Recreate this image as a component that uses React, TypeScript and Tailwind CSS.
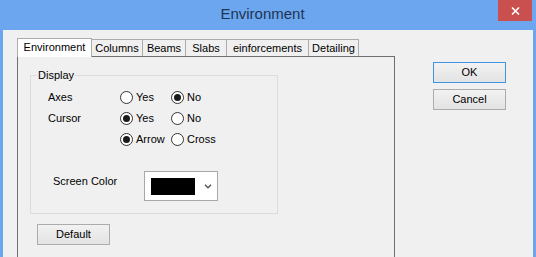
import React from 'react';

function Radio({ checked, label, width }: { checked: boolean; label: string; width: string }) {
  return (
    <div className={`flex items-center ${width}`}>
      <span className="w-[13px] h-[13px] rounded-full border border-[#333] bg-white flex items-center justify-center">
        {checked && <span className="w-[7px] h-[7px] rounded-full bg-[#1a1a1a]" />}
      </span>
      <span className="ml-[3px] leading-[13px]">{label}</span>
    </div>
  );
}

function Button({ label, primary }: { label: string; primary?: boolean }) {
  return (
    <button
      className={`w-[73px] h-[21px] border bg-gradient-to-b from-[#f2f2f2] to-[#e3e3e3] leading-[13px] ${
        primary ? 'border-[#3d95e0]' : 'border-[#acacac]'
      }`}
    >
      {label}
    </button>
  );
}

const tabs = [
  { label: 'Columns', w: 'w-[52px]' },
  { label: 'Beams', w: 'w-[44px]' },
  { label: 'Slabs', w: 'w-[42px]' },
  { label: 'einforcements', w: 'w-[83px]' },
  { label: 'Detailing', w: 'w-[51px]' },
];

export default function App() {
  return (
    <div className="w-[536px] h-[257px] bg-[#6ca6ef] flex flex-col overflow-hidden font-['Liberation_Sans',Arial,sans-serif] text-[11px] text-black">
      {/* Title bar */}
      <div className="h-[30px] relative flex items-center justify-center pr-[11px] pb-[1px]">
        <span className="text-[15px] text-[#1d3554]">Environment</span>
        <div className="absolute right-[4px] top-0 w-[34px] h-[21px] bg-[#c9504f] flex items-center justify-center">
          <svg width="9" height="8" viewBox="0 0 9 8">
            <path d="M1 0.5 L8 7.5 M8 0.5 L1 7.5" stroke="white" strokeWidth="1.6" />
          </svg>
        </div>
      </div>

      {/* Client area */}
      <div className="flex-1 mx-[3px] bg-[#f0f0f0] flex pt-[8px] pl-[14px]">
        <div className="w-[378px] flex flex-col">
          {/* Tabs */}
          <div className="flex items-end h-[18px]">
            <div className="relative z-10 -mb-px w-[75px] h-[19px] bg-white border-t border-l border-r border-[#acacac] flex items-center justify-center pb-[1px]">
              Environment
            </div>
            {tabs.map((t) => (
              <div
                key={t.label}
                className={`${t.w} -ml-px h-[17px] border-t border-l border-r border-[#acacac] bg-[#f0f0f0] flex items-center justify-center pt-[1px]`}
              >
                {t.label}
              </div>
            ))}
          </div>

          {/* Panel */}
          <div className="flex-1 border-t border-l border-r border-[#6f6f6f] pl-[12px] pt-[18px]">
            <div className="relative w-[248px] h-[139px] border border-[#dcdcdc] pt-[11px] pl-[17px]">
              <span className="absolute -top-[7px] left-[6px] px-[1px] bg-[#f0f0f0] leading-[13px]">Display</span>

              <div className="flex items-center h-[21px]">
                <span className="w-[72px] leading-[13px]">Axes</span>
                <Radio checked={false} label="Yes" width="w-[51px]" />
                <Radio checked={true} label="No" width="w-[50px]" />
              </div>
              <div className="flex items-center h-[21px]">
                <span className="w-[72px] leading-[13px]">Cursor</span>
                <Radio checked={true} label="Yes" width="w-[51px]" />
                <Radio checked={false} label="No" width="w-[50px]" />
              </div>
              <div className="flex items-center h-[21px]">
                <span className="w-[72px]" />
                <Radio checked={true} label="Arrow" width="w-[51px]" />
                <Radio checked={false} label="Cross" width="w-[50px]" />
              </div>

              <div className="flex items-start mt-[21px] pl-[5px]">
                <span className="w-[91px] mt-[4px] leading-[13px]">Screen Color</span>
                <div className="w-[74px] h-[30px] border border-[#a8a8a8] bg-white flex items-center pl-[6px] pr-[5px]">
                  <span className="w-[44px] h-[17px] bg-black" />
                  <svg className="ml-auto" width="8" height="5" viewBox="0 0 8 5">
                    <path d="M1 0.8 L4 3.8 L7 0.8" fill="none" stroke="#555" strokeWidth="1.3" />
                  </svg>
                </div>
              </div>
            </div>

            <div className="mt-[10px] ml-[7px]">
              <Button label="Default" />
            </div>
          </div>
        </div>

        {/* Side buttons */}
        <div className="ml-[38px] mt-[24px] flex flex-col gap-[6px]">
          <Button label="OK" primary />
          <Button label="Cancel" />
        </div>
      </div>
    </div>
  );
}
